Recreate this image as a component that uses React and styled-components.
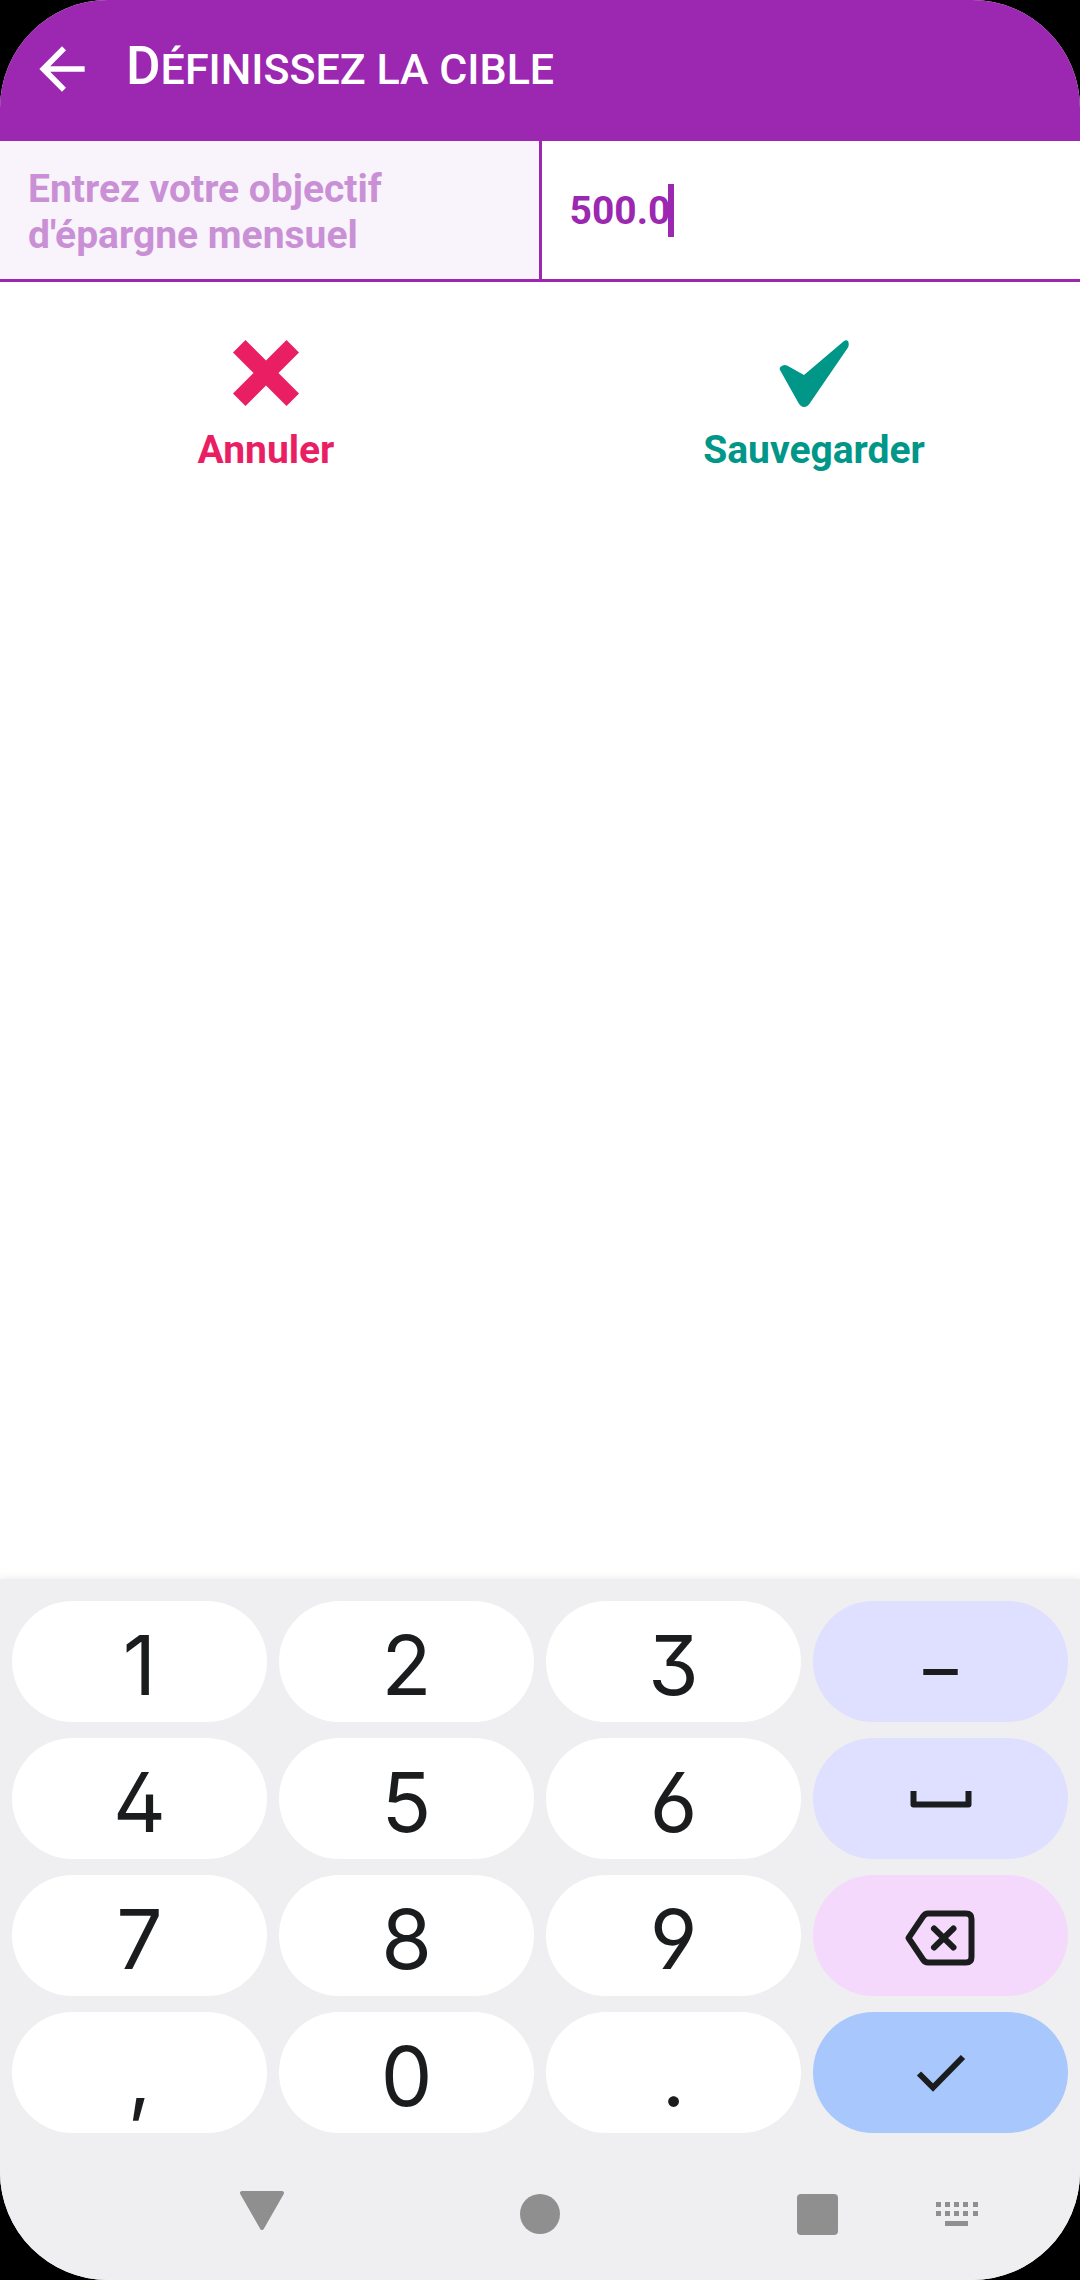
import React, { useState } from "react";
import styled, { createGlobalStyle } from "styled-components";

const purple = "#9c27b0";

const GlobalStyle = createGlobalStyle`
  * { box-sizing: border-box; }
  body {
    margin: 0;
    background: #000;
    font-family: Roboto, "Liberation Sans", sans-serif;
  }
  button, input { font: inherit; color: inherit; border: 0; margin: 0; padding: 0; background: none; }
  svg { display: block; }
`;

const Screen = styled.div`
  display: flex;
  flex-direction: column;
  min-height: 100vh;
  background: #fff;
  border-radius: 108px;
  overflow: hidden;
`;

const AppBar = styled.header`
  display: flex;
  align-items: center;
  gap: 30px;
  height: 141px;
  padding: 0 28px 4px;
  background: ${purple};
  color: #fff;
`;

const Title = styled.h1`
  margin: 0;
  padding-bottom: 2px;
  font: 500 53px/60px Roboto, sans-serif;
`;

const SmallCaps = styled.span`
  font-size: 43px;
  text-transform: uppercase;
`;

const FieldRow = styled.div`
  display: grid;
  grid-template-columns: 1fr 1fr;
  gap: 3px;
  height: 141px;
  background: ${purple};
  border-bottom: 3px solid ${purple};
  font-size: 39px;
  font-weight: 700;
  line-height: 46px;
`;

const FieldLabel = styled.label`
  display: flex;
  align-items: center;
  padding: 4px 112px 0 28px;
  background: #f9f4fb;
  color: #ca90d5;
`;

const FieldValue = styled.div`
  display: flex;
  align-items: center;
  padding: 0 28px;
  background: #fff;
  color: ${purple};
`;

const AmountInput = styled.input`
  field-sizing: content;
  height: 48px;
  padding-top: 2px;
  outline: none;
  caret-color: transparent;
`;

const Caret = styled.span`
  width: 6px;
  height: 53px;
  margin-left: -2px;
  background: ${purple};
`;

const Actions = styled.div`
  display: grid;
  grid-template-columns: 1fr 1fr;
  gap: 16px;
`;

const ActionButton = styled.button`
  display: flex;
  flex-direction: column;
  align-items: center;
  gap: 20px;
  padding: 57px 0 24px;
  color: ${(p) => p.$color};
  font-size: 39px;
  font-weight: 700;
  line-height: 46px;
`;

const Keyboard = styled.section`
  margin-top: auto;
  background: #efeff1;
  box-shadow: 0 0 8px rgba(0, 0, 0, 0.1);
`;

const Keys = styled.div`
  display: grid;
  grid-template-columns: repeat(4, 1fr);
  grid-auto-rows: 121px;
  gap: 16px 12px;
  padding: 22px 12px 15px;
`;

const keyColors = {
  digit: "#fff",
  symbol: "#dfdfff",
  erase: "#f5d9fd",
  enter: "#a8c7fc",
};

const Key = styled.button`
  display: flex;
  align-items: center;
  justify-content: center;
  padding-top: ${(p) => (p.$kind === "digit" ? "8px" : "0")};
  border-radius: 61px;
  background: ${(p) => keyColors[p.$kind]};
  color: #1a1c1e;
  font-family: ${(p) => (p.$kind === "symbol" ? '"Open Sans"' : "Inter")}, sans-serif;
  font-size: 82px;
  line-height: 96px;
  font-feature-settings: "ss01";
`;

const NavBar = styled.nav`
  display: grid;
  grid-template-columns: repeat(6, 1fr);
  height: 132px;
  padding: 0 54px 0 192px;
  color: #8f8f8f;
`;

const NavButton = styled.button`
  display: flex;
  align-items: center;
  justify-content: center;
  grid-row: 1;
  grid-column: ${(p) => p.$column};
`;

const BackArrow = () => (
  <svg width="68" height="68" viewBox="0 0 24 24" fill="currentColor">
    <path d="M20 11H7.83l5.59-5.59L12 4l-8 8 8 8 1.41-1.41L7.83 13H20v-2z" />
  </svg>
);

const CrossIcon = () => (
  <svg width="66" height="68" viewBox="0 0 66 68" fill="currentColor">
    <path d="M12.500 1 33 21.500 53.500 1 66 13.500 45.500 34 66 54.500 53.500 67 33 46.500 12.500 67 0 54.500 20.500 34 0 13.500z" />
  </svg>
);

const TickIcon = () => (
  <svg width="70" height="68" viewBox="0 0 70 68" fill="currentColor">
    <path d="M1 31Q0 29 2 27.500Q4.500 25 8 26.500L25 36L65 2Q67 .5 69 2Q70.500 5 69 8.500L31 64Q28.500 68 25 68Q22 68 19.500 64z" />
  </svg>
);

const SpaceIcon = () => (
  <svg width="62" height="18" viewBox="0 0 62 18" fill="none" stroke="currentColor" strokeWidth="6" strokeLinejoin="round">
    <path d="M3.500 1v13.500h55V1" />
  </svg>
);

const EraseIcon = () => (
  <svg width="74" height="60" viewBox="0 -4 74 60" fill="none" stroke="currentColor" strokeWidth="6" strokeLinejoin="round">
    <path d="M4.500 28 19 6.500Q21 3.500 24 3.500H62Q67.500 3.500 67.500 9V47Q67.500 52.500 62 52.500H24Q21 52.500 19 49.500z" />
    <path strokeLinecap="round" d="M30 18.500 49.500 37.500M49.500 18.500 30 37.500" />
  </svg>
);

const EnterIcon = () => (
  <svg width="50" height="38" viewBox="0 0 50 38" fill="none" stroke="currentColor" strokeWidth="6">
    <path d="M3 19.500 17 33.500 47 3" />
  </svg>
);

const keys = [
  { label: "1" },
  { label: "2" },
  { label: "3" },
  { label: "–", kind: "symbol" },
  { label: "4" },
  { label: "5" },
  { label: "6" },
  { label: "Espace", kind: "symbol", Icon: SpaceIcon },
  { label: "7" },
  { label: "8" },
  { label: "9" },
  { label: "Effacer", kind: "erase", Icon: EraseIcon },
  { label: "," },
  { label: "0" },
  { label: "." },
  { label: "Valider", kind: "enter", Icon: EnterIcon },
];

export default function App() {
  const [amount, setAmount] = useState("500.0");

  const press = (label) => {
    if (label === "Effacer") setAmount(amount.slice(0, -1));
    else if (label.length === 1) setAmount(amount + label);
  };

  return (
    <Screen>
      <GlobalStyle />
      <AppBar>
        <button aria-label="Retour"><BackArrow /></button>
        <Title>D<SmallCaps>éfinissez la cible</SmallCaps></Title>
      </AppBar>
      <main>
        <FieldRow>
          <FieldLabel htmlFor="amount">Entrez votre objectif d'épargne mensuel</FieldLabel>
          <FieldValue>
            <AmountInput id="amount" inputMode="decimal" value={amount} onChange={(e) => setAmount(e.target.value)} />
            <Caret />
          </FieldValue>
        </FieldRow>
        <Actions>
          <ActionButton $color="#e91e63"><CrossIcon />Annuler</ActionButton>
          <ActionButton $color="#009688"><TickIcon />Sauvegarder</ActionButton>
        </Actions>
      </main>
      <Keyboard>
        <Keys>
          {keys.map(({ label, kind = "digit", Icon }) => (
            <Key key={label} $kind={kind} aria-label={label} onClick={() => press(label)}>
              {Icon ? <Icon /> : label}
            </Key>
          ))}
        </Keys>
        <NavBar>
          <NavButton $column={1} aria-label="Masquer le clavier">
            <svg width="46" height="48" viewBox="0 0 46 48" fill="currentColor" stroke="currentColor" strokeWidth="4" strokeLinejoin="round">
              <path d="M3 3h40L23 38z" />
            </svg>
          </NavButton>
          <NavButton $column={3} aria-label="Accueil">
            <svg width="40" height="40" viewBox="0 0 40 40" fill="currentColor"><circle cx="20" cy="20" r="20" /></svg>
          </NavButton>
          <NavButton $column={5} aria-label="Applications récentes">
            <svg width="41" height="41" viewBox="0 0 41 41" fill="currentColor"><rect width="41" height="41" rx="4" /></svg>
          </NavButton>
          <NavButton $column={6} aria-label="Changer de clavier">
            <svg width="42" height="24" viewBox="0 0 42 24" fill="currentColor">
              {[0, 9, 18, 27, 37].map((x) => (
                <React.Fragment key={x}>
                  <rect x={x} y="0" width="5" height="5" />
                  <rect x={x} y="9" width="5" height="5" />
                </React.Fragment>
              ))}
              <rect x="9" y="19" width="23" height="5" />
            </svg>
          </NavButton>
        </NavBar>
      </Keyboard>
    </Screen>
  );
}
